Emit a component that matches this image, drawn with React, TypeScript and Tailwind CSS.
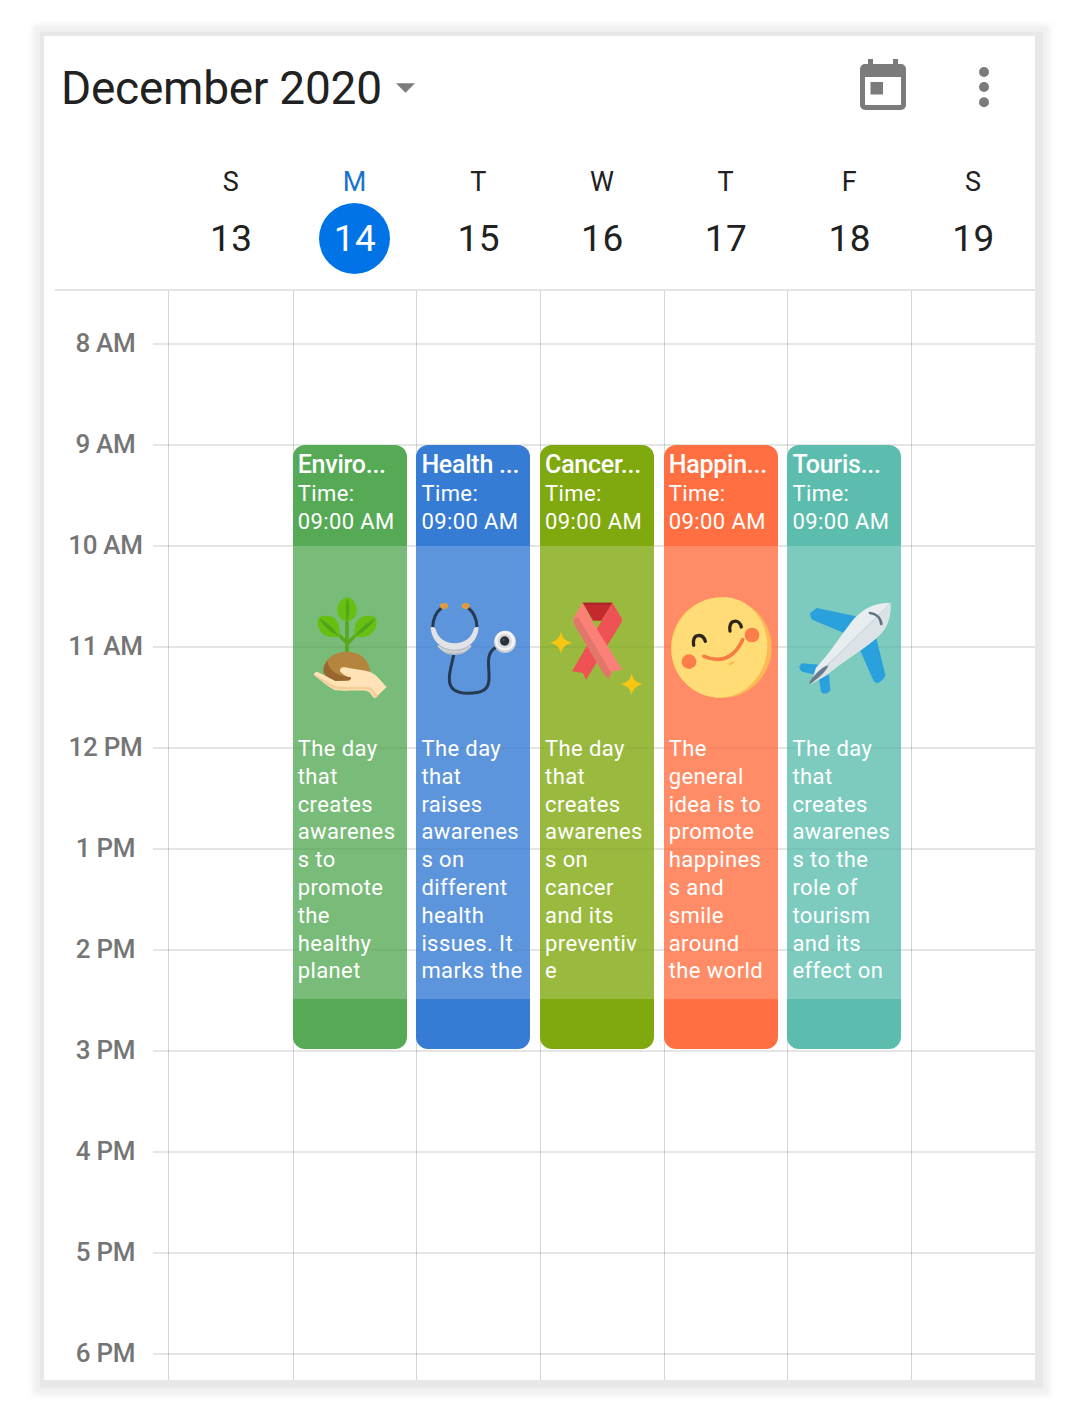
import React from "react";

const hours = ["8 AM", "9 AM", "10 AM", "11 AM", "12 PM", "1 PM", "2 PM", "3 PM", "4 PM", "5 PM", "6 PM"];

const days = [
  { letter: "S", date: 13 },
  { letter: "M", date: 14, today: true },
  { letter: "T", date: 15 },
  { letter: "W", date: 16 },
  { letter: "T", date: 17 },
  { letter: "F", date: 18 },
  { letter: "S", date: 19 },
];

function Plant() {
  return (
    <svg viewBox="39 480 342 340" className="h-[113.33px] w-[114px]">
      <g fill="none" stroke="#5aa91c" strokeWidth="10">
        <path d="M201 670V530" />
        <path d="M201 638L150 590" />
        <path d="M201 642L252 590" />
      </g>
      <path d="M201 501c18 5 29 21 29 39s-11 31-29 35c-18-4-29-17-29-35s11-34 29-39z" fill="#66bf11" />
      <path d="M116 563c17-9 38-7 50 4 12 12 16 32 11 53-21 3-40 1-52-12-11-12-15-30-9-45z" fill="#66bf11" />
      <path d="M287 563c-17-9-38-7-50 4-12 12-16 32-13 53 21 3 41 1 53-12 11-12 16-30 10-45z" fill="#66bf11" />
      <path d="M201 503c9 20 9 50 0 72-3-8-4-50 0-72z" fill="#4fa51a" />
      <path d="M118 565c22 10 45 32 58 53-25-10-45-29-58-53z" fill="#4fa51a" />
      <path d="M286 565c-22 10-47 32-62 54 25-10 48-30 62-54z" fill="#4fa51a" />
      <path d="M201 575V668" stroke="#5aa91c" strokeWidth="9" />
      <path d="M130 728c-2-35 28-63 69-63 40 0 68 22 72 62l-60 25h-58z" fill="#b5853f" />
      <path d="M130 726c0-14 4-25 11-34 6 32 34 47 74 49l-5 14h-58z" fill="#986730" />
      <path d="M102 734c0-9 8-10 16-6l48 25 38-1c6-1 10-5 9-10-13-2-24-8-32-17-3-10 4-15 14-13 26 5 52 8 76 14 19 8 31 27 49 45l-35 34c-10-5-11-17-24-22-19-4-69 1-96-2-24-13-42-29-63-47z" fill="#ffe3b7" />
      <path d="M102 735c21 17 43 35 65 43 28 4 62-3 98 2 10 3 14 15 22 25l8-8c-10-7-12-20-27-25-24-4-61 2-96-3-21-5-46-27-70-34z" fill="#f4cf98" />
    </svg>
  );
}

function Stethoscope() {
  return (
    <svg viewBox="410 480 342 340" className="h-[113.33px] w-[114px]">
      <g fill="none" stroke="#253a51" strokeWidth="9" strokeLinecap="round">
        <path d="M486 534c-15 12-25 31-26 58" />
        <path d="M567 534c15 12 25 31 26 58" />
        <path d="M523 675c-5 25-13 46-13 72 0 29 20 43 56 43 41 0 62-10 63-42 1-26-4-50 0-68 3-12 10-22 20-27" />
      </g>
      <ellipse cx="494" cy="528" rx="12" ry="9" fill="#dda32c" />
      <ellipse cx="559" cy="528" rx="12" ry="9" fill="#dda32c" />
      <circle cx="495" cy="528" r="5" fill="#ef8a5b" />
      <circle cx="560" cy="528" r="5" fill="#ef8a5b" />
      <path d="M475 645c8 18 25 30 50 30s43-12 51-30z" fill="#b9bec5" />
      <path d="M476 648c11 12 30 18 50 18s39-6 49-18" fill="none" stroke="#d6dade" strokeWidth="4" />
      <path d="M454 592c7-3 13-1 15 6 6 26 28 42 57 42s51-16 57-42c2-7 8-9 15-6-2 38-29 67-72 67s-70-29-72-67z" fill="#e2e3e5" />
      <circle cx="677" cy="636" r="33" fill="#cbd0d7" />
      <circle cx="677" cy="632" r="30" fill="#f5f5f5" />
      <circle cx="676" cy="633" r="22" fill="#dadbdd" />
      <circle cx="676" cy="633" r="14" fill="#29313b" />
      <circle cx="672" cy="629" r="4" fill="#46515b" />
    </svg>
  );
}

function Ribbon() {
  return (
    <svg viewBox="31 480 342 340" className="h-[113.33px] w-[114px]">
      <path d="M159 518h90l-34 54h-25z" fill="#c22a2d" />
      <path d="M158 518h91l-5 6h-82z" fill="#a9242b" />
      <path d="M248 518l29 48c1 5-1 10-3 14l-96 155-9 15-9-21-33-5 88-150z" fill="#ee5252" />
      <path d="M159 518l-28 47c-1 7 0 13 4 20l86 145 16 16 11-22 30-4-89-144z" fill="#fb8078" />
      <path d="M131 567l4 18 86 145 16 16 8-17L145 561z" fill="#e2766b" />
      <path d="M94 604c4 20 11 28 33 34-22 7-29 14-33 33-5-19-11-27-32-33 21-7 28-14 32-34z" fill="#f9c513" />
      <path d="M306 730c4 19 11 26 32 33-21 6-28 14-32 33-4-19-11-27-32-33 21-7 28-14 32-33z" fill="#f9c513" />
    </svg>
  );
}

function Smile() {
  return (
    <svg viewBox="402 480 342 340" className="h-[113.33px] w-[114px]">
      <circle cx="574" cy="653" r="151" fill="#fcb956" />
      <path d="M591 502c69 7 121 70 121 146 0 78-57 144-126 154-87 8-162-58-162-146 0-88 73-162 167-154z" fill="#ffdc75" />
      <g fill="none" strokeLinecap="round">
        <path d="M491 646c-3-17 2-28 13-29 10-2 18 4 22 17M600 603c-3-17 3-28 13-29 10-2 18 5 21 17" stroke="#30251b" strokeWidth="10" />
        <path d="M522 679c26 11 54 12 75 0 18-10 30-26 41-50" stroke="#f67c43" strokeWidth="11" />
        <path d="M600 702l9-5" stroke="#fbbd54" strokeWidth="8" />
      </g>
      <circle cx="477" cy="695" r="22" fill="#fb7e48" />
      <circle cx="666" cy="615" r="22" fill="#fb7e48" />
    </svg>
  );
}

function Airplane() {
  return (
    <svg viewBox="52 480 342 340" className="h-[113.33px] w-[114px]">
      <g fill="#2aa1dc">
        <path d="M141 534l118 25-36 50-93-39c-7-4-9-12-9-20z" />
        <path d="M320 624l27 110c0 10-15 23-25 26l-10-6-40-92z" />
        <path d="M98 700l52 4-14 30-35-8c-14-5-16-20-3-26z" />
        <path d="M178 733l4 47c-3 12-25 15-28 4l-6-36z" />
      </g>
      <path d="M362 519c4 30-4 73-38 102-44 39-104 72-153 114l-48 28 16-50c43-45 70-91 109-141 31-37 72-56 114-53z" fill="#e8edef" />
      <path d="M361 521c3 30-4 71-37 100-44 39-104 72-153 114l-31 17 17-34z" fill="#dce3e6" />
      <path d="M361 521L164 715" stroke="#c3d5df" strokeWidth="3" />
      <path d="M176 706c-2 9-8 15-17 25-15 15-29 25-39 32-2-7 4-16 19-32 14-14 25-23 37-25z" fill="#687b8a" />
      <path d="M301 549c18 2 32 14 34 33" fill="none" stroke="#607382" strokeWidth="8" strokeLinecap="round" />
    </svg>
  );
}

const events = [
  null,
  { title: "Enviro...", color: "bg-[#56aa55]", light: "bg-[#79bb78]", art: <Plant />,
    lines: ["The day", "that", "creates", "awarenes", "s to", "promote", "the", "healthy", "planet"] },
  { title: "Health ...", color: "bg-[#367bd4]", light: "bg-[#5d95dc]", art: <Stethoscope />,
    lines: ["The day", "that", "raises", "awarenes", "s on", "different", "health", "issues. It", "marks the"] },
  { title: "Cancer...", color: "bg-[#80a80f]", light: "bg-[#9aba3f]", art: <Ribbon />,
    lines: ["The day", "that", "creates", "awarenes", "s on", "cancer", "and its", "preventiv", "e"] },
  { title: "Happin...", color: "bg-[#ff6f41]", light: "bg-[#ff8c66]", art: <Smile />,
    lines: ["The", "general", "idea is to", "promote", "happines", "s and", "smile", "around", "the world"] },
  { title: "Touris...", color: "bg-[#5cbcad]", light: "bg-[#7dcbbe]", art: <Airplane />,
    lines: ["The day", "that", "creates", "awarenes", "s to the", "role of", "tourism", "and its", "effect on"] },
  null,
];

function EventCard({ event }: { event: NonNullable<(typeof events)[number]> }) {
  return (
    <article className={`mt-[154px] h-[603.5px] w-[114px] overflow-hidden rounded-[12px] text-white ${event.color}`}>
      <header className="h-[101px] pl-[5px] pt-[6px]">
        <h2 className="h-[28px] whitespace-pre text-[25px] font-medium leading-[28px] tracking-[-0.25px]">{event.title}</h2>
        <p className="whitespace-pre pt-px text-[22px] leading-[27.8px] tracking-[0.4px]">{"Time:\n09:00 AM"}</p>
      </header>
      <div className={`relative h-[452.5px] pt-[44px] ${event.light}`}>
        <div className="absolute inset-x-0 top-[100px]">
          {[0, 1, 2, 3].map((row) => (
            <div key={row} className="h-[101px] border-t-2 border-black/[0.035]" />
          ))}
        </div>
        <div className="relative h-[145px]">{event.art}</div>
        <p className="relative whitespace-pre pl-[5px] text-[22px] leading-[27.8px] tracking-[0.4px]">
          {event.lines.join("\n")}
        </p>
      </div>
    </article>
  );
}

export default function App() {
  return (
    <main className="h-[1420px] w-[1080px] overflow-hidden bg-white pl-[44px] pt-[36px] font-['Roboto',sans-serif] text-[#212121]">
      <section className="flex h-[1344px] w-[991px] flex-col bg-white shadow-[2px_2px_1px_6px_#e8e8e8,2px_2px_4px_12px_#f1f1f1,2px_2px_7px_14px_#f6f6f6]">
        <header className="flex h-[122px] items-start pl-[17px]">
          <h1 className="mt-[25px] whitespace-nowrap text-[46px] leading-[54px] tracking-[-0.25px]">December 2020</h1>
          <svg viewBox="0 0 18 9" className="ml-[14px] mt-[47px] h-[10px] w-[19px]" fill="#7c7c7c">
            <path d="M0 0h18L9 9z" />
          </svg>
          <svg viewBox="0 0 46 51" className="ml-auto mt-[23px] h-[51px] w-[46px]" fill="#7b7b7b">
            <path fillRule="evenodd" d="M8 0h5v5h20V0h5v5h3a5 5 0 0 1 5 5v36a5 5 0 0 1-5 5H5a5 5 0 0 1-5-5V10a5 5 0 0 1 5-5h3zM5 18v28h36V18z" />
            <path d="M10.500 23h12.500v12.500H10.500z" />
          </svg>
          <svg viewBox="0 0 10 42" className="ml-[73px] mr-[46px] mt-[30px] h-[42px] w-[10px]" fill="#7b7b7b">
            <circle cx="5" cy="6" r="5" />
            <circle cx="5" cy="21" r="5" />
            <circle cx="5" cy="36.300" r="5" />
          </svg>
        </header>
        <div className="grid h-[131px] grid-cols-[125px_repeat(7,123.700px)]">
          <span />
          {days.map((day, i) => (
            <div key={i} className="flex flex-col items-center">
              <span className={`mt-[9px] text-[27px] leading-[30px] ${day.today ? "text-[#1873d0]" : ""}`}>{day.letter}</span>
              <span
                className={`mt-[6px] flex h-[71px] w-[71px] shrink-0 items-center justify-center rounded-full pl-px text-[37px] leading-none tracking-[0.5px] ${
                  day.today ? "bg-[#0073e6] text-white" : ""
                }`}
              >
                {day.date}
              </span>
            </div>
          ))}
        </div>
        <div className="relative ml-[11px] flex flex-1 overflow-hidden border-t-2 border-[#e4e4e4]">
          <div className="w-[113px] shrink-0">
            {hours.map((hour) => (
              <div key={hour} className="flex h-[101px] justify-center pr-[12px] pt-[36px] text-[26px] font-medium leading-[32px] tracking-[-0.3px] text-[#757575]">
                {hour}
              </div>
            ))}
          </div>
          <div className="absolute inset-x-0 top-0 pl-[98px] pt-[52px]">
            {hours.map((hour) => (
              <div key={hour} className="h-[101px] border-t-2 border-black/10" />
            ))}
          </div>
          <div className="relative grid flex-1 grid-cols-[124.700px_repeat(6,123.700px)]">
            {events.map((event, i) => (
              <div key={i} className="h-[1100px] bg-[linear-gradient(90deg,rgba(0,0,0,0.16)_1px,transparent_1px)]">
                {event && <EventCard event={event} />}
              </div>
            ))}
          </div>
        </div>
      </section>
    </main>
  );
}
